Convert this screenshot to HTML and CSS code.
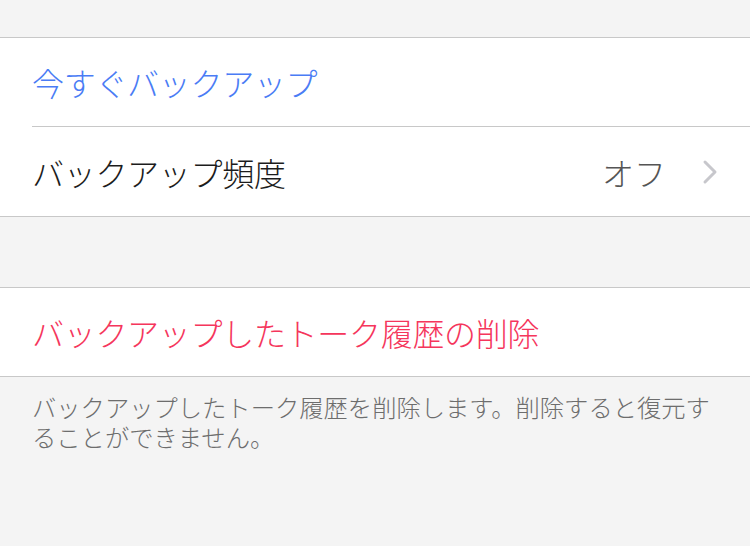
FILE: index.html
```html
<!DOCTYPE html>
<html lang="ja">
<head>
<meta charset="utf-8">
<link rel="stylesheet" href="styles.css">
</head>
<body>
<div class="spacer-top"></div>
<section class="group">
  <div class="row">
    <span class="label blue">今すぐバックアップ</span>
  </div>
  <div class="row row-tall">
    <span class="label">バックアップ頻度</span>
    <span class="value">オフ</span>
    <svg class="chevron" width="16" height="26" viewBox="0 0 16 26"><path d="M3 3 L13 13 L3 23" fill="none" stroke="#c7c7cc" stroke-width="3" stroke-linecap="round" stroke-linejoin="round"/></svg>
  </div>
</section>
<div class="spacer-mid"></div>
<section class="group">
  <div class="row">
    <span class="label red">バックアップしたトーク履歴の削除</span>
  </div>
</section>
<p class="footer">バックアップしたトーク履歴を削除します。削除すると復元することができません。</p>
</body>
</html>
```
FILE: styles.css
```css
html, body {
  margin: 0;
  padding: 0;
  background: #f4f4f4;
  font-family: "Noto Sans CJK JP", "Noto Sans", sans-serif;
  font-weight: 300;
  width: 750px;
  height: 546px;
  overflow: hidden;
}
.spacer-top { height: 37px; }
.spacer-mid { height: 70px; }
.group {
  background: #fff;
  border-top: 1px solid #c8c8c8;
  border-bottom: 1px solid #c8c8c8;
  padding-left: 32px;
}
.row {
  height: 88px;
  display: flex;
  align-items: center;
  padding-right: 32px;
}
.row-tall { height: 89px; }
.row + .row {
  border-top: 1px solid #c8c8c8;
}
.label {
  font-size: 32px;
  color: #1c1c1c;
  flex: 1;
  letter-spacing: -0.3px;
}
.blue { color: #4a7cf5; }
.red { color: #f5365c; }
.value {
  font-size: 32px;
  color: #555;
  margin-right: 36px;
}
.chevron { display: block; }
.footer {
  margin: 0;
  padding: 15px 32px 0 32px;
  font-size: 24.3px;
  line-height: 30px;
  color: #6d6d6d;
}
```
